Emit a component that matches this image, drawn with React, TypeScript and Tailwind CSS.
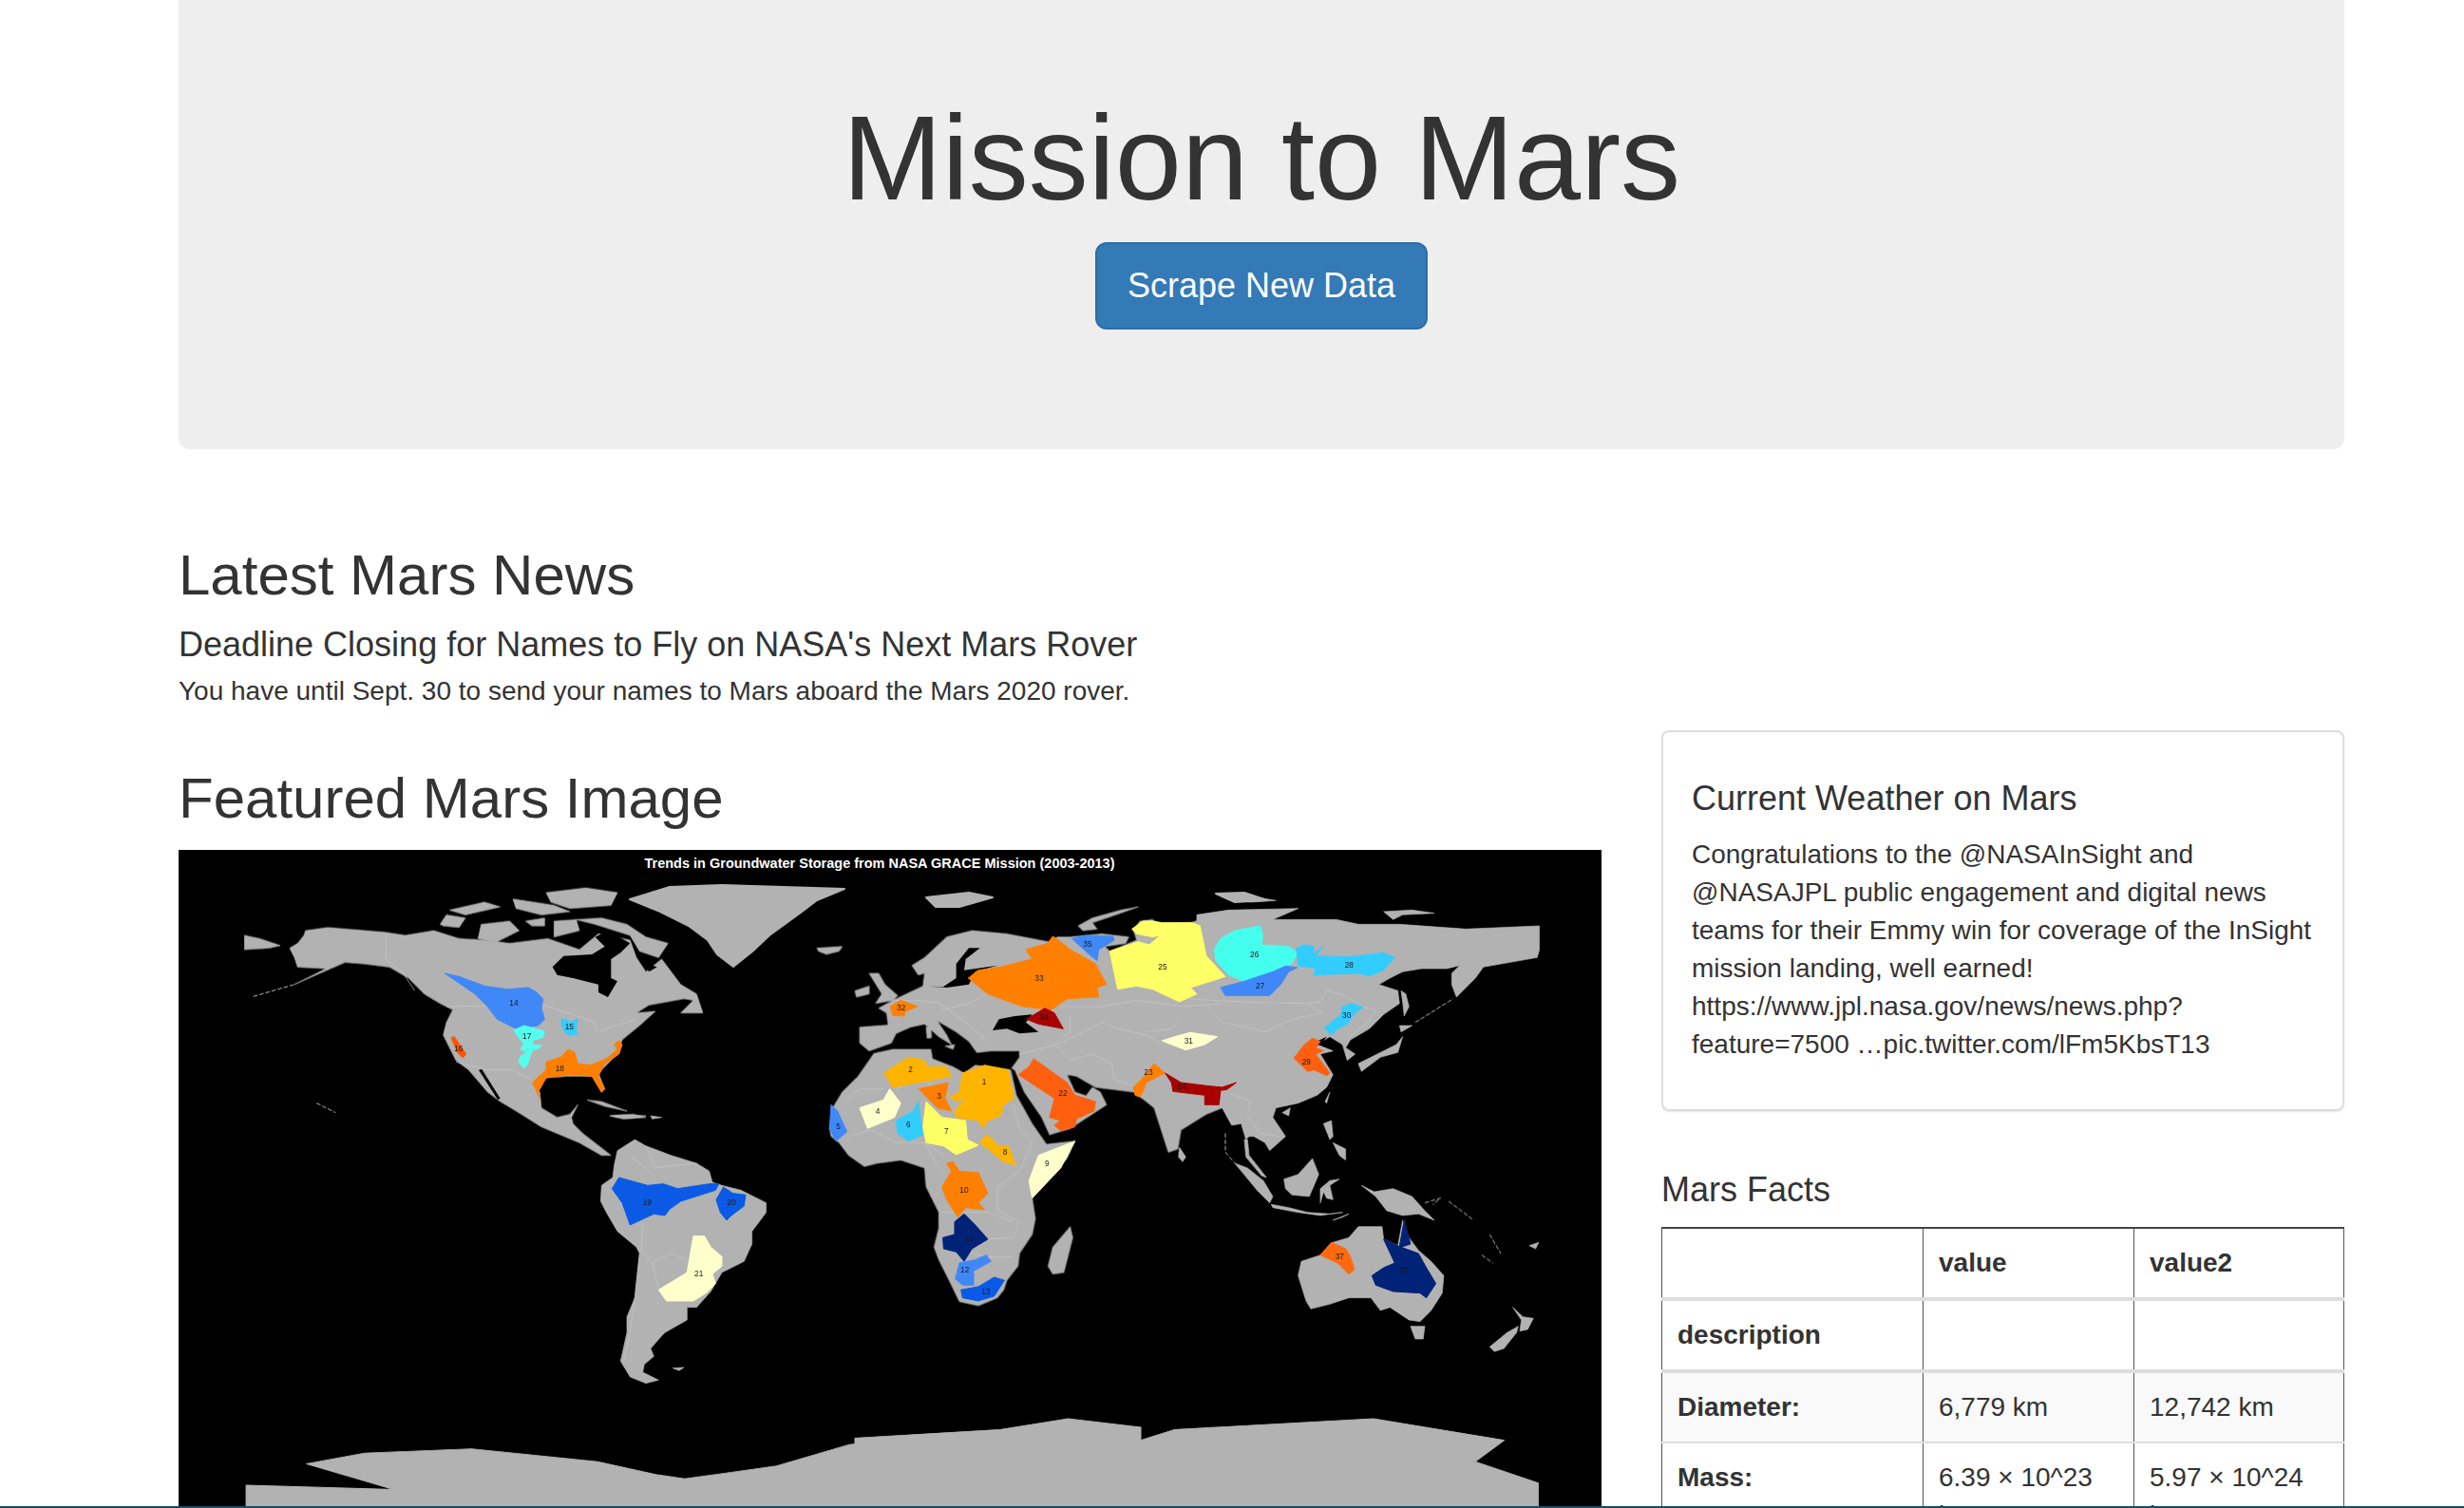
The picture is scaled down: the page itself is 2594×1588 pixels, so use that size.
import React from "react";

type Region = { n: string; fill: string; pts: string; x: number; y: number };

type MapLayer = {
  transform: string;
  land?: string[];
  seas?: string[];
  borders?: string[];
  thin?: string[];
  regions?: Region[];
};

const ORANGE = "#ff8000";
const AMBER = "#ffb400";
const RED_ORANGE = "#ff6010";
const DARK_RED = "#a80000";
const PALE = "#ffffcc";
const YELLOW = "#ffff66";
const SKY = "#33ccff";
const BLUE = "#4088f8";
const DEEP_BLUE = "#0a5ae6";
const NAVY = "#002277";

const layers: MapLayer[] = [
  {
    // north america
    transform: "translate(250 930) scale(0.3333)",
    land: [
      "215,150 285,140 465,155 530,165 620,150 700,175 780,180 860,190 980,175 1080,210 1140,160 1240,180 1260,235 1290,280 1340,240 1400,320 1450,350 1470,410 1400,410 1440,370 1410,365 1300,385 1260,410 1320,405 1270,450 1215,495 1200,540 1140,600 1160,650 1150,660 1120,610 1040,610 970,615 935,640 955,660 960,710 1010,740 1050,730 1075,700 1055,740 1060,760 1090,790 1180,860 1150,860 1080,820 960,770 880,720 830,690 790,660 730,590 690,560 650,480 660,440 680,400 640,380 590,350 540,300 480,265 400,255 340,250 260,285 180,320 280,270 190,265 180,235 165,205 190,190 210,165",
      "22,165 70,175 135,197 100,205 22,210",
      "1070,115 1150,110 1230,130 1290,170 1360,190 1330,235 1270,215 1240,165 1130,130",
      "760,175 770,130 860,120 890,150 820,185",
      "640,130 660,100 720,110 700,140 650,135",
      "670,85 780,60 830,75 720,100",
      "975,30 1100,15 1200,30 1180,70 1050,80 990,60",
      "870,50 1000,70 1050,90 960,100 880,80",
      "910,120 970,110 970,135 930,135",
      "1000,120 1070,115 1080,150 1000,170",
      "1105,685 1150,690 1230,720 1160,705",
      "1175,735 1250,730 1290,740 1220,745",
    ],
    seas: [
      "995,265 1030,230 1120,225 1160,200 1130,170 1170,150 1240,190 1210,220 1180,240 1180,300 1200,310 1170,360 1140,345 1140,320 1060,300 1010,290",
      "1280,250 1325,265 1300,280",
      "762,590 772,588 830,680 822,684",
    ],
    borders: [
      "470,165 468,240 520,280 560,340",
      "660,390 965,385 1060,415 1130,440 1135,470 1260,430",
      "690,565 790,590 870,590 930,620",
    ],
    thin: ["50,358 180,320", "250,695 310,725"],
    regions: [
      { n: "14", fill: BLUE, pts: "655,285 700,295 780,325 850,335 920,330 945,345 965,365 960,395 970,430 950,450 880,460 820,430 790,390 750,350", x: 873, y: 377 },
      { n: "15", fill: SKY, pts: "1022,430 1040,430 1050,440 1075,430 1068,465 1075,478 1045,480 1030,465", x: 1048, y: 452 },
      { n: "16", fill: "#ff5500", pts: "675,488 685,485 722,540 712,552 695,535", x: 698, y: 522 },
      { n: "17", fill: "#55ffee", pts: "872,465 905,450 970,468 965,488 935,495 930,510 960,512 955,520 930,530 915,575 905,585 888,565 895,545 915,535 895,525 905,505 890,490", x: 914, y: 484 },
      { n: "18", fill: ORANGE, pts: "932,630 975,590 975,565 1020,550 1045,525 1065,535 1075,570 1115,575 1165,555 1200,525 1190,510 1205,497 1215,510 1205,540 1160,570 1140,610 1160,650 1150,660 1120,610 1050,605 975,615 950,660 955,680", x: 1018, y: 585 },
    ],
  },
  {
    // south america
    transform: "translate(600 1170) scale(0.3333)",
    land: [
      "97,285 100,235 135,210 140,170 150,125 205,90 240,110 320,140 400,165 440,190 450,225 480,235 540,250 620,290 620,320 575,380 575,420 550,475 480,510 445,570 400,620 370,620 370,660 300,700 290,710 255,750 265,775 235,800 230,825 280,850 240,860 190,840 160,790 180,700 180,650 205,590 220,450 210,430 150,380 115,320",
      "130,15 170,12 240,15 200,22 150,20",
      "255,15 290,20 260,25",
      "325,812 360,810 345,820",
    ],
    borders: [
      "195,145 250,190 270,215",
      "240,110 270,180 340,170 400,165",
      "230,360 225,440 260,480 320,450 370,470",
      "220,450 205,590 190,700 170,790",
      "260,480 280,560",
    ],
    regions: [
      { n: "19", fill: DEEP_BLUE, pts: "133,245 155,210 245,235 295,230 340,245 440,230 470,230 460,250 350,285 315,310 300,330 265,325 190,360 165,290", x: 244, y: 288 },
      { n: "20", fill: DEEP_BLUE, pts: "462,280 485,240 515,260 555,265 550,300 510,330 495,345 475,320", x: 510, y: 288 },
      { n: "21", fill: PALE, pts: "280,565 370,510 390,395 425,395 445,430 480,460 480,490 450,515 460,545 430,575 390,600 350,600 305,600", x: 407, y: 512 },
    ],
  },
  {
    // europe, africa, west asia
    transform: "translate(860 950) scale(0.3333)",
    land: [
      "180,478 240,465 360,465 365,495 430,520 465,540 500,515 612,530 630,610 680,700 725,765 815,755 790,810 730,880 680,935 690,1000 680,1050 640,1110 635,1150 600,1195 590,1225 570,1250 510,1275 450,1262 420,1200 385,1130 370,1090 385,1030 385,980 345,900 340,840 265,815 190,825 150,835 100,800 70,760 45,740 40,715 50,650 80,600 130,550 165,500",
      "625,530 655,600 710,680 735,735 800,715 915,640 895,600 870,585 850,612 815,600 790,545 820,550 880,585 1000,600 1040,630 1065,650 1110,790 1140,780 1150,720 1230,670 1280,650 1290,30 1180,65 1080,70 1060,55 1020,60 1000,90 1010,120 925,155 910,140 975,130 985,110 900,100 800,110 760,110 730,125 600,100 490,90 410,110 340,175 300,200 320,230 340,225 335,265 240,310 195,335 220,350 225,388 135,395 135,445 165,470 235,445 250,415 295,395 340,385 385,425 425,450 410,420 380,375 440,410 480,440 505,475 550,470 640,470 640,490 615,525",
      "165,225 195,225 215,260 255,295 240,310 185,320 205,290",
      "120,280 165,265 165,290 125,300",
      "0,145 80,140 70,155 30,165 5,155",
      "730,1150 745,1090 800,1025 808,1060 780,1170 745,1175",
      "825,75 870,50 960,25 1015,15 930,45 870,65 885,85 840,90",
      "345,395 360,395 362,428 348,430",
      "405,455 435,450 430,465",
    ],
    seas: [
      "555,405 575,370 625,360 680,355 660,380 700,410 640,415 600,400",
      "350,265 395,270 440,240 440,195 480,145 515,145 470,180 465,215 570,200 500,220 480,260 410,270",
    ],
    borders: [
      "90,620 140,590 215,590",
      "250,590 330,560 420,610",
      "100,740 170,720 250,760 340,760 400,800",
      "340,760 380,830 400,850",
      "620,640 640,720 680,760 640,850 570,900 570,970 640,1010 620,1060 540,1065",
      "395,980 540,980 620,1010",
      "390,1090 540,1120 620,1120",
      "240,310 310,310 390,320 430,350 470,380 540,440",
      "380,310 400,340 480,320 540,290",
      "780,440 860,400 900,380 950,400 1040,420 1090,450",
      "740,440 800,500 870,480 930,510 940,560 1000,580",
      "640,480 720,460 780,440",
      "800,360 800,410 775,430",
      "770,330 900,330 1010,310 1160,330 1280,320",
    ],
    regions: [
      { n: "1", fill: AMBER, pts: "420,615 450,600 460,540 530,515 605,530 622,620 590,640 580,675 540,690 525,715 510,690 440,680 435,660 470,620 445,630", x: 528, y: 568 },
      { n: "2", fill: AMBER, pts: "212,540 290,490 340,500 350,520 410,520 425,550 350,565 240,585", x: 296, y: 528 },
      { n: "3", fill: ORANGE, pts: "322,590 415,570 405,620 425,660 380,650", x: 386, y: 612 },
      { n: "4", fill: PALE, pts: "135,650 210,625 230,590 265,635 245,680 160,715", x: 192, y: 660 },
      { n: "5", fill: BLUE, pts: "45,640 65,660 95,725 60,755 40,715", x: 68, y: 708 },
      { n: "6", fill: SKY, pts: "250,690 305,660 320,630 335,735 290,755 255,730", x: 289, y: 702 },
      { n: "7", fill: YELLOW, pts: "335,710 345,630 395,680 470,690 475,750 510,768 440,798 400,770 345,760", x: 409, y: 722 },
      { n: "8", fill: AMBER, pts: "515,760 535,735 555,750 575,770 605,770 628,830 590,820", x: 594, y: 790 },
      { n: "9", fill: PALE, pts: "670,880 700,800 815,755 770,840 680,935", x: 727, y: 824 },
      { n: "10", fill: ORANGE, pts: "395,900 425,850 410,825 430,820 450,850 510,855 540,920 510,950 530,972 470,965 445,995 410,940", x: 465, y: 910 },
      { n: "11", fill: NAVY, pts: "398,1060 435,1050 435,1010 465,985 500,1020 540,1065 490,1095 465,1135 440,1105 400,1095", x: 482, y: 1061 },
      { n: "12", fill: BLUE, pts: "437,1190 450,1140 500,1130 535,1115 550,1135 495,1165 495,1210 460,1210", x: 467, y: 1162 },
      { n: "13", fill: DEEP_BLUE, pts: "455,1225 510,1215 560,1185 592,1195 560,1245 510,1260 460,1250", x: 534, y: 1230 },
      { n: "22", fill: RED_ORANGE, pts: "637,545 670,520 685,495 720,520 790,570 815,610 880,630 875,660 820,685 815,710 770,722 750,705 770,690 735,680 750,620", x: 777, y: 604 },
      { n: "23", fill: ORANGE, pts: "1000,585 1030,555 1065,510 1100,540 1040,570 1030,600 1020,615 1005,610", x: 1047, y: 536 },
      { n: "24", fill: DARK_RED, pts: "1100,540 1150,570 1230,580 1280,585 1325,570 1295,592 1275,595 1270,640 1225,640 1225,610 1125,598 1120,570", x: 1152, y: 583 },
      { n: "25", fill: YELLOW, pts: "925,155 1015,125 1050,135 1085,105 1060,110 1010,100 995,85 1030,60 1060,60 1090,65 1185,65 1210,75 1230,170 1290,235 1260,245 1180,270 1200,290 1145,315 1060,275 1010,265 950,275", x: 1092, y: 203 },
      { n: "32", fill: ORANGE, pts: "232,330 265,310 318,330 280,345 275,360 240,358", x: 266, y: 332 },
      { n: "33", fill: ORANGE, pts: "478,240 510,215 580,205 680,180 660,150 730,130 745,108 770,125 800,150 880,195 915,260 885,270 890,300 790,305 740,340 650,330 540,290", x: 702, y: 240 },
      { n: "34", fill: DARK_RED, pts: "662,370 720,335 750,350 778,400 700,385", x: 718, y: 364 },
      { n: "35", fill: BLUE, pts: "805,115 850,105 935,108 940,120 890,150 885,185 860,165", x: 855, y: 133 },
    ],
  },
  {
    // east asia
    transform: "translate(1200 940) scale(0.3333)",
    land: [
      "180,70 280,55 500,50 420,85 620,85 690,100 820,100 1030,115 1262,105 1262,180 1255,205 1085,235 1060,270 1000,330 985,290 985,255 1010,230 970,240 890,240 830,250 790,270 755,290 815,310 820,350 770,385 725,430 665,465 650,490 680,510 655,530 640,480 600,455 560,480 610,500 590,505 570,510 610,575 590,615 560,640 500,665 430,680 420,710 460,770 410,815 395,790 360,770 345,770 335,780 320,730 290,735 260,680 210,670 180,700 180,500",
      "690,540 750,510 810,480 830,455 815,505 760,520 700,565",
      "820,420 860,420 825,440",
      "825,310 840,320 850,360 835,390 830,345",
      "585,660 600,630 590,665",
      "450,695 475,680 470,705",
      "770,60 860,55 930,65 830,70 800,85",
      "250,5 340,10 430,25 350,30 280,20",
    ],
    seas: ["548,475 590,455 580,470 552,490"],
    borders: [
      "150,335 230,340 320,345 500,350 570,345 590,310 650,325 700,360 745,370 720,410 660,455",
      "215,360 260,410 400,440 480,400 575,380 530,350",
      "285,635 350,660 340,700 380,760 440,770",
      "20,440 100,430 130,400",
    ],
    thin: ["870,410 990,335"],
    regions: [
      { n: "26", fill: "#44ffee", pts: "235,180 255,145 300,120 380,105 388,130 385,165 470,170 498,190 480,225 420,250 330,280 280,260 240,215", x: 362, y: 195 },
      { n: "27", fill: BLUE, pts: "255,300 330,280 420,250 460,232 497,237 470,250 445,290 410,325 340,325 270,325", x: 380, y: 295 },
      { n: "28", fill: SKY, pts: "495,175 520,165 550,170 545,195 580,170 555,200 660,203 770,190 805,205 770,245 725,263 690,255 550,260 555,238 500,232", x: 661, y: 227 },
      { n: "29", fill: RED_ORANGE, pts: "487,522 520,480 545,460 570,470 555,490 580,500 555,510 570,530 600,570 590,578 550,560 530,565", x: 526, y: 533 },
      { n: "30", fill: SKY, pts: "583,428 635,385 640,360 670,350 705,362 680,380 655,415 625,430 605,450", x: 653, y: 386 },
      { n: "31", fill: PALE, pts: "70,468 120,452 160,442 245,455 205,480 145,497 100,480", x: 154, y: 467 },
    ],
  },
  {
    // south east asia and australia
    transform: "translate(1200 1180) scale(0.3333)",
    land: [
      "340,60 345,110 400,180 385,175 335,115 330,60",
      "300,135 340,150 390,190 420,240 410,260 370,220",
      "415,265 470,275 530,290 600,295 640,290 570,300 500,290 420,275",
      "455,185 500,170 545,120 565,170 535,240 480,235 460,215",
      "570,215 600,190 630,185 600,205 610,250 590,245 580,225 570,260",
      "580,10 605,0 610,50 600,60",
      "610,70 650,90 650,125 630,110",
      "700,205 740,225 800,215 860,240 900,285 930,315 880,295 830,300 780,285 745,240",
      "610,315 660,295 640,305",
      "500,490 510,445 570,425 610,385 660,370 690,335 765,335 770,375 815,395 830,315 850,370 880,410 920,445 960,490 955,545 920,600 885,635 850,630 790,590 760,600 730,560 660,560 600,580 540,595 525,570",
      "855,650 900,650 895,690 870,690",
      "1105,715 1160,670 1195,650 1190,670 1150,720 1120,730",
      "1178,590 1210,620 1243,625 1225,660 1200,665 1205,630",
      "125,85 145,115 135,130 122,115",
      "1230,395 1260,385 1250,405",
    ],
    thin: ["900,260 950,245 925,265", "975,255 1055,315", "1080,425 1115,450", "1105,360 1140,420", "270,40 270,100 300,135"],
    regions: [
      { n: "37", fill: "#ff6a10", pts: "570,425 605,385 650,405 665,430 678,470 660,485 625,450", x: 631, y: 430 },
      { n: "38", fill: NAVY, pts: "733,490 770,465 805,450 770,375 820,398 835,315 855,390 825,400 880,420 905,465 935,515 905,560 885,545 800,540 745,520", x: 833, y: 472 },
    ],
  },
  {
    // antarctica, west then east
    transform: "translate(180 880) scale(0.5102 0.4515)",
    land: ["155,1515 460,1525 280,1465 400,1440 620,1430 880,1460 1000,1490 1060,1500 1250,1470 1400,1420 1568,1400 1568,1570 155,1570"],
  },
  {
    transform: "translate(900 880) scale(0.5102 0.4515)",
    land: ["0,1405 300,1385 440,1360 590,1380 590,1410 660,1385 1070,1360 1340,1410 1280,1460 1410,1510 1410,1570 0,1570"],
  },
  {
    // greenland and far north islands, plain page coords
    transform: "",
    land: [
      "663,947 705,934 760,932 889,936 860,948 843,961 810,985 792,1002 772,1018 755,1005 745,990 725,975 695,960",
      "975,945 1020,940 1045,945 1010,955 985,955",
      "1280,941 1310,940 1334,948 1300,950",
    ],
  },
];

function GraceMap() {
  return (
    <div className="h-[693px] w-[1498px] overflow-hidden bg-black">
      <svg viewBox="188 895 1498 693" className="block h-[693px] w-[1498px]">
        <g className="blur-[0.5px]">
          {layers.map((l, i) => (
            <g key={i} transform={l.transform} fill="#b2b2b2" stroke="#b2b2b2" strokeWidth="2" strokeLinejoin="round">
              {l.land?.map((pts) => (
                <polygon key={pts} points={pts} />
              ))}
            </g>
          ))}
          {layers.map((l, i) => (
            <g key={i} transform={l.transform} fill="#000">
              {l.seas?.map((pts) => (
                <polygon key={pts} points={pts} />
              ))}
            </g>
          ))}
          {layers.map((l, i) => (
            <g key={i} transform={l.transform} fill="none">
              {l.borders?.map((pts) => (
                <polyline key={pts} points={pts} stroke="#c8c8c8" strokeWidth="2" />
              ))}
              {l.thin?.map((pts) => (
                <polyline key={pts} points={pts} stroke="#b2b2b2" strokeWidth="3" strokeDasharray="14 6" />
              ))}
            </g>
          ))}
          {layers.map((l, i) => (
            <g key={i} transform={l.transform}>
              {l.regions?.map((r) => (
                <g key={r.n}>
                  <polygon points={r.pts} fill={r.fill} stroke={r.fill} strokeWidth="3" strokeLinejoin="round" />
                  <text x={r.x} y={r.y + 9} fontSize="25" textAnchor="middle" fill="#1a1a1a">
                    {r.n}
                  </text>
                </g>
              ))}
            </g>
          ))}
        </g>
        <text x="926" y="914" fontSize="14.5" fontWeight="700" textAnchor="middle" fill="#fff">
          Trends in Groundwater Storage from NASA GRACE Mission (2003-2013)
        </text>
      </svg>
    </div>
  );
}

const rows = [
  ["description", "", ""],
  ["Diameter:", "6,779 km", "12,742 km"],
  ["Mass:", "6.39 × 10^23 kg", "5.97 × 10^24 kg"],
];

function FactsTable() {
  return (
    <table className="w-[719px] table-fixed border-collapse border-t-2 border-[#444] text-[28px] leading-[40px]">
      <thead>
        <tr>
          <th className="w-[275px] border-x border-b-4 border-x-[#555] border-b-[#ddd] p-4"></th>
          <th className="w-[222px] border-x border-b-4 border-x-[#555] border-b-[#ddd] p-4 text-left font-bold">value</th>
          <th className="border-x border-b-4 border-x-[#555] border-b-[#ddd] p-4 text-left font-bold">value2</th>
        </tr>
      </thead>
      <tbody>
        {rows.map((row, i) => (
          <tr key={row[0]} className={i === 1 ? "bg-[#f9f9f9]" : ""}>
            <th className={`border-x border-x-[#555] border-b-[#ddd] p-4 text-left align-top font-bold ${i === 0 ? "border-b-4" : "border-b-2"}`}>{row[0]}</th>
            <td className={`h-[75px] border-x border-x-[#555] border-b-[#ddd] p-4 align-top ${i === 0 ? "border-b-4" : "border-b-2"}`}>{row[1]}</td>
            <td className={`border-x border-x-[#555] border-b-[#ddd] p-4 align-top ${i === 0 ? "border-b-4" : "border-b-2"}`}>{row[2]}</td>
          </tr>
        ))}
      </tbody>
    </table>
  );
}

export default function App() {
  return (
    <div className="relative h-[1588px] overflow-hidden bg-white font-['Liberation_Sans',Arial,sans-serif] text-[28px] leading-[40px] text-[#333]">
      <div className="ml-[188px] w-[2280px]">
        <div className="flex h-[473px] flex-col items-center rounded-b-xl bg-[#eee] pt-[98px]">
          <h1 className="mb-[18px] text-[126px] leading-[138.6px]">Mission to Mars</h1>
          <button className="h-[92px] w-[350px] rounded-xl border-2 border-[#2e6da4] bg-[#337ab7] text-[36px] leading-[48px] text-white">
            Scrape New Data
          </button>
        </div>

        <h2 className="mt-[100px] text-[60px] leading-[66px]">Latest Mars News</h2>
        <h4 className="mt-[20px] text-[36px] leading-[39.6px]">Deadline Closing for Names to Fly on NASA's Next Mars Rover</h4>
        <p className="mt-[9px]">You have until Sept. 30 to send your names to Mars aboard the Mars 2020 rover.</p>

        <div className="mt-[21px] flex items-start justify-between">
          <div className="w-[1498px]">
            <h2 className="mb-[20.5px] mt-[39.5px] text-[60px] leading-[66px]">Featured Mars Image</h2>
            <GraceMap />
          </div>
          <div className="w-[719px]">
            <div className="h-[401px] rounded-lg border-2 border-[#ddd] px-[30px] pt-[50px] shadow-[0_1px_2px_rgba(0,0,0,0.1)]">
              <h4 className="mb-[20px] text-[36px] leading-[39.6px]">Current Weather on Mars</h4>
              <p>
                Congratulations to the @NASAInSight and @NASAJPL public engagement and digital news teams for their Emmy win for coverage of the InSight mission landing, well earned! https://www.jpl.nasa.gov/news/news.php?feature=7500 …pic.twitter.com/lFm5KbsT13
              </p>
            </div>
            <h4 className="mb-[20px] mt-[63px] text-[36px] leading-[39.6px]">Mars Facts</h4>
            <FactsTable />
          </div>
        </div>
      </div>
      <div className="absolute inset-x-0 bottom-0 h-[2px] bg-[#1c4a63]"></div>
    </div>
  );
}
